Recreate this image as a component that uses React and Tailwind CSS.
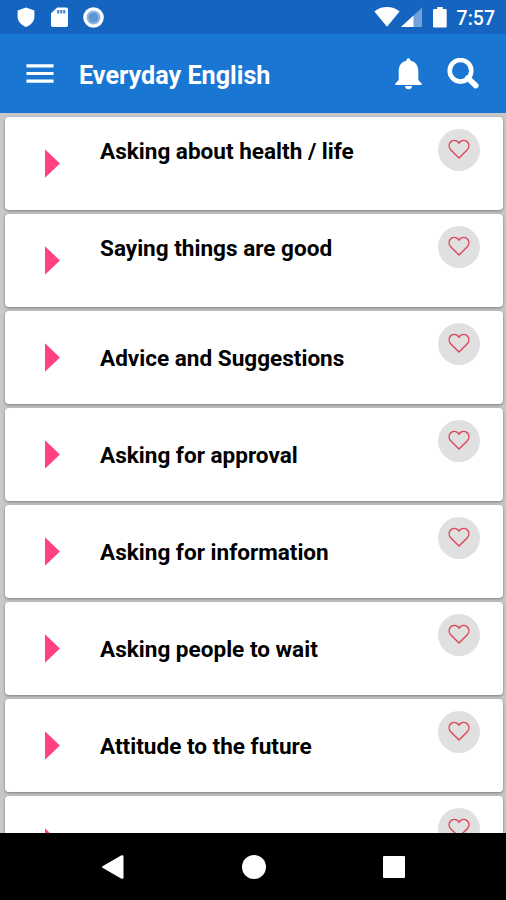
const topics = [
  { id: 1, title: "Asking about health / life", raised: true },
  { id: 2, title: "Saying things are good", raised: true },
  { id: 3, title: "Advice and Suggestions" },
  { id: 4, title: "Asking for approval" },
  { id: 5, title: "Asking for information" },
  { id: 6, title: "Asking people to wait" },
  { id: 7, title: "Attitude to the future" },
  { id: 8, title: "" },
];

const StatusBar = () => (
  <div className="flex h-[34px] shrink-0 items-center justify-between bg-[#1565c0] pl-[17px] pr-[11px] text-white">
    <div className="flex items-center gap-[16px]">
      <svg className="h-[20px] w-[18px]" viewBox="0 0 18 20" fill="currentColor">
        <path d="M9 .4 17.400 3.400V9.500C17.400 14.200 13.800 18.300 9 19.900 4.200 18.300.6 14.200.6 9.500V3.400Z" />
      </svg>
      <svg className="h-[20px] w-[17px]" viewBox="0 0 17 20" fill="currentColor">
        <path d="M6.200.4H15.200Q17 .4 17 2.200V18.200Q17 20 15.200 20H1.800Q0 20 0 18.200V6.200Z" />
        <path d="M6.200 3h2v3.400h-2zM9.200 3h2v3.400h-2zM12.200 3h2v3.400h-2z" fill="#3f80cc" />
      </svg>
      <svg className="-ml-[1px] h-[21px] w-[21px]" viewBox="0 0 21 21">
        <circle cx="10.5" cy="10.5" r="10.3" fill="#fff" />
        <circle cx="10.5" cy="10.5" r="7" fill="#8db4e4" />
        <circle cx="10.5" cy="10.5" r="4.800" fill="#5d94d6" />
      </svg>
    </div>
    <div className="flex items-center">
      <svg className="h-[20px] w-[26px]" viewBox="0 0 26 20" fill="currentColor">
        <path d="M13 19.800.4 4.400C4 1.400 8.300 0 13 0S22 1.400 25.600 4.400Z" />
      </svg>
      <svg className="ml-[1px] h-[20px] w-[21px]" viewBox="0 0 21 20" fill="currentColor">
        <path d="M21 .8V20H0Z" opacity=".4" />
        <path d="M12.500 8.600V20H0Z" />
      </svg>
      <svg className="ml-[11px] h-[21px] w-[14px]" viewBox="0 0 14 21" fill="currentColor">
        <path d="M4.200 0h5.600v2h2.800Q13.700 2 13.700 3.200V19.400Q13.700 20.500 12.600 20.500H1.200Q0 20.500 0 19.400V3.200Q0 2 1.200 2h3Z" />
      </svg>
      <span className="ml-[10px] pt-[4px] text-[19.500px] font-medium leading-none">7:57</span>
    </div>
  </div>
);

const AppBar = () => (
  <header className="flex h-[79px] shrink-0 items-center bg-[#1976d2] pl-[26px] pr-[26px] text-white">
    <button className="w-[28px]" aria-label="Menu">
      <svg className="h-[20px] w-[28px]" viewBox="0 0 28 20" fill="currentColor">
        <path d="M.5.3h27v3.200H.5zM.5 7.900h27v3.200H.5zM.5 15.500h27v3.200H.5z" />
      </svg>
    </button>
    <h1 className="ml-[25px] grow whitespace-nowrap pt-[4px] text-[25.200px] font-bold leading-[28px]">Everyday English</h1>
    <button aria-label="Notifications">
      <svg className="h-[32px] w-[27px]" viewBox="0 0 27 32" fill="currentColor">
        <path d="M13.500.3C14.900.3 15.400 1.300 15.600 2.800 20.600 3.900 23.300 7.900 23.300 13V22L26.600 25.400V27H.4V25.400L3.700 22V13C3.700 7.900 6.400 3.900 11.400 2.800 11.600 1.300 12.100.3 13.500.3Z" />
        <path d="M10 28h7C16.800 30.100 15.500 31.300 13.500 31.300S10.200 30.100 10 28Z" />
      </svg>
    </button>
    <button className="ml-[25px]" aria-label="Search">
      <svg className="h-[32px] w-[33px]" viewBox="0 0 33 32" fill="none" stroke="currentColor">
        <circle cx="13.500" cy="12.800" r="10.800" strokeWidth="4.600" />
        <path d="M20.800 20 28.800 27.600" strokeWidth="5.600" strokeLinecap="round" />
      </svg>
    </button>
  </header>
);

const TopicCard = ({ topic }) => (
  <li className="flex h-[93px] shrink-0 rounded-[4px] bg-white pl-[40px] pr-[23px] shadow-[0_1px_3px_rgba(0,0,0,0.4)]">
    <svg className="mt-[32px] h-[29px] w-[16px]" viewBox="0 0 16 29" fill="#ff4081">
      <path d="M0 .3 14.900 14.500 0 28.700Z" />
    </svg>
    <h2
      className={`ml-[39px] grow whitespace-nowrap text-[22.550px] font-bold leading-[28px] text-black ${
        topic.raised ? "mt-[21px]" : "mt-[34px]"
      }`}
    >
      {topic.title}
    </h2>
    <button
      className="mt-[12px] flex h-[42px] w-[42px] items-center justify-center rounded-full bg-[#e0e0e0] pb-[2px]"
      aria-label="Add to favourites"
    >
      <svg className="h-[20px] w-[22px]" viewBox="0 0 22 20" fill="none" stroke="#dc4458" strokeWidth="1.400">
        <path d="M11 18.900 2.700 10.700C.7 8.500.6 5.300 2.300 3.200 4.400.6 8.800.7 11 4 13.200.7 17.600.6 19.700 3.200 21.400 5.300 21.300 8.500 19.300 10.700Z" />
      </svg>
    </button>
  </li>
);

const NavBar = () => (
  <nav className="flex h-[67px] shrink-0 items-center justify-between bg-black pl-[102px] pr-[101px]">
    <svg className="h-[24px] w-[22px]" viewBox="0 0 22 24" fill="#fff">
      <path d="M.5 11.200 19.500.3Q21.500-.3 21.500 1.500V22.500Q21.500 24.300 19.500 23.700L.5 12.800Q-.3 12 .5 11.200Z" />
    </svg>
    <span className="h-[24px] w-[24px] rounded-full bg-white" />
    <span className="h-[22px] w-[22px] rounded-[1px] bg-white" />
  </nav>
);

const App = () => (
  <div className="flex h-[900px] w-[506px] flex-col overflow-hidden font-['Roboto',sans-serif]">
    <StatusBar />
    <AppBar />
    <ul className="flex min-h-0 grow flex-col gap-[4px] overflow-hidden bg-[#c8c8c8] pl-[5px] pr-[3px] pt-[4px]">
      {topics.map((topic) => (
        <TopicCard key={topic.id} topic={topic} />
      ))}
    </ul>
    <NavBar />
  </div>
);

export default App;
